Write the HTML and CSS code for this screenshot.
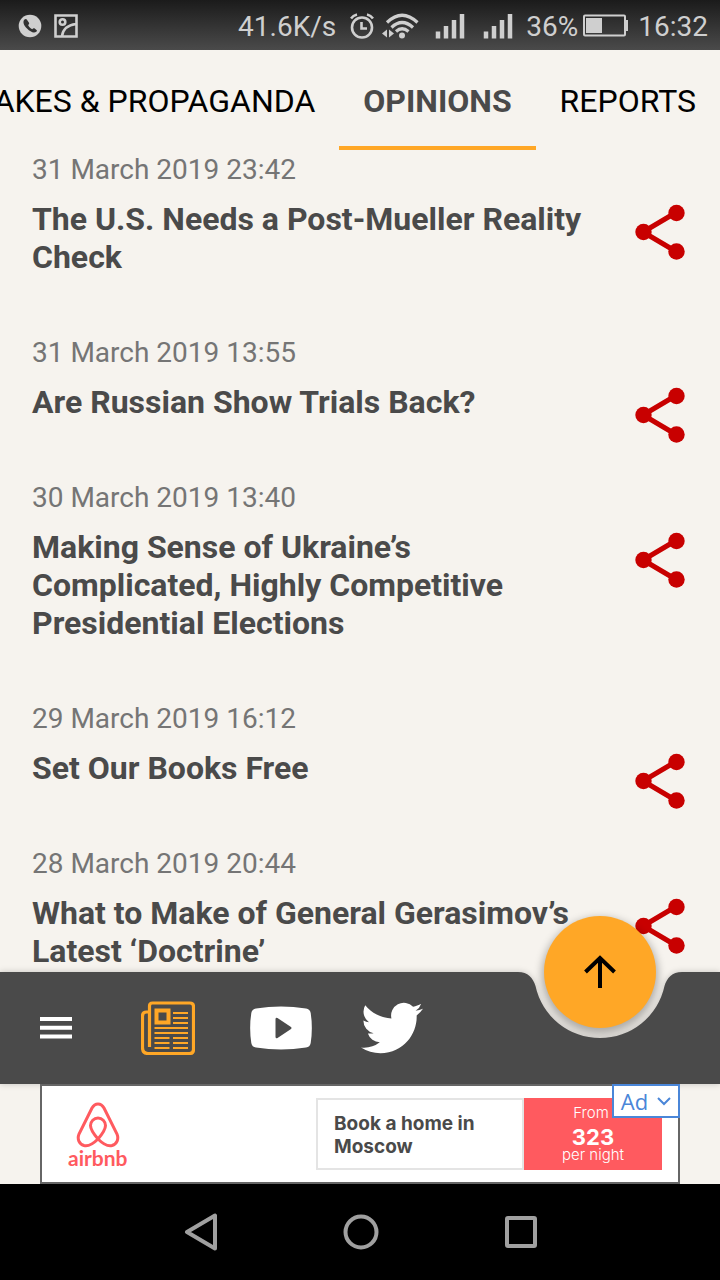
FILE: index.html
```html
<!DOCTYPE html>
<html lang="en">
<head>
<meta charset="utf-8">
<meta name="viewport" content="width=device-width, initial-scale=1">
<title>Opinions</title>
<link rel="stylesheet" href="styles.css">
</head>
<body>
<svg class="defs" aria-hidden="true">
  <symbol id="share" viewBox="0 0 64 64">
    <path d="M48 12.500 15 32 48 51.500" fill="none" stroke="currentColor" stroke-width="5"/>
    <circle cx="48.500" cy="13" r="8.200" fill="currentColor"/>
    <circle cx="15.500" cy="32" r="8.200" fill="currentColor"/>
    <circle cx="48.500" cy="51.500" r="8.200" fill="currentColor"/>
  </symbol>
  <symbol id="signal" viewBox="0 0 30 26">
    <path d="M3 25.500v-7M11 25.500V13M19 25.500V7M27 25.500V1" fill="none" stroke="currentColor" stroke-width="4.500"/>
  </symbol>
</svg>

<header class="status">
  <div class="status-group notices">
    <svg width="24" height="24" viewBox="0 0 24 24"><circle cx="12" cy="12" r="11.300" fill="currentColor"/><path d="M6.500 5.500c-2 2-1 5.500 2.500 9s7 5 9.500 3c.7-.6.600-1 0-1.600l-1.800-1.500c-.6-.4-1-.3-1.600.2l-.9.7c-1.500-.6-3.500-2.600-4.100-4.200l.8-.9c.4-.5.400-1 .1-1.500L9.300 6.200c-.8-1.300-1.800-1.600-2.800-.7z" fill="#303030"/></svg>
    <svg width="24" height="24" viewBox="0 0 24 24" fill="none" stroke="currentColor" stroke-width="2.600"><path d="M1.500 1.500h21v21h-21zM8 22C9 15 14 11 22 10"/><circle cx="8.500" cy="8" r="2.800"/></svg>
  </div>
  <div class="status-group">
    <span class="speed">41.6K/s</span>
    <svg width="24" height="26" viewBox="0 0 24 26" fill="none" stroke="currentColor" stroke-width="2.600"><circle cx="12" cy="14.500" r="10"/><path d="M11.500 9v6.500H17M1 5.500Q3 2.500 7 1.500M23 5.500Q21 2.500 17 1.500"/></svg>
    <svg class="wifi" width="38" height="26" viewBox="0 0 38 26"><g fill="none" stroke="currentColor" stroke-width="3.200"><path d="M5 9.500Q20-5 35.500 9.500M9.500 14.500Q20 4.500 31 14.500M14 18.500Q20 13 26.500 18.500"/></g><circle cx="20" cy="22.500" r="3" fill="currentColor"/><path d="M5 16.500v8L0 20.500zM7 16.500v8l5-4z" fill="currentColor"/></svg>
    <svg class="bars" width="30" height="26"><use href="#signal"/></svg>
    <svg class="bars second" width="30" height="26"><use href="#signal"/></svg>
    <span>36%</span>
    <svg class="battery" width="45" height="24" viewBox="0 0 45 24"><rect x="1" y="1.500" width="41" height="20" rx="1" fill="none" stroke="currentColor" stroke-width="2"/><path d="M3 4h16v15H3zM42 6h3v11h-3z" fill="currentColor"/></svg>
    <time>16:32</time>
  </div>
</header>

<nav class="tabs">
  <a class="tab" href="#fakes">FAKES &amp; PROPAGANDA</a>
  <a class="tab active" href="#opinions" aria-current="page">OPINIONS</a>
  <a class="tab" href="#reports">REPORTS</a>
</nav>

<main class="list">
  <article class="item">
    <div class="text"><time class="date">31 March 2019 23:42</time><h2 class="title">The U.S. Needs a Post-Mueller Reality Check</h2></div>
    <button class="share" aria-label="Share"><svg width="64" height="64"><use href="#share"/></svg></button>
  </article>
  <article class="item">
    <div class="text"><time class="date">31 March 2019 13:55</time><h2 class="title">Are Russian Show Trials Back?</h2></div>
    <button class="share" aria-label="Share"><svg width="64" height="64"><use href="#share"/></svg></button>
  </article>
  <article class="item">
    <div class="text"><time class="date">30 March 2019 13:40</time><h2 class="title">Making Sense of Ukraine’s Complicated, Highly Competitive Presidential Elections</h2></div>
    <button class="share" aria-label="Share"><svg width="64" height="64"><use href="#share"/></svg></button>
  </article>
  <article class="item">
    <div class="text"><time class="date">29 March 2019 16:12</time><h2 class="title">Set Our Books Free</h2></div>
    <button class="share" aria-label="Share"><svg width="64" height="64"><use href="#share"/></svg></button>
  </article>
  <article class="item">
    <div class="text"><time class="date">28 March 2019 20:44</time><h2 class="title">What to Make of General Gerasimov’s Latest ‘Doctrine’</h2></div>
    <button class="share" aria-label="Share"><svg width="64" height="64"><use href="#share"/></svg></button>
  </article>
</main>

<div class="dock">
  <button class="fab" aria-label="Back to top"><svg width="34" height="34" viewBox="0 0 34 34" fill="none" stroke="currentColor" stroke-width="4"><path d="M17 33V4M2.500 17 17 3l14.500 14"/></svg></button>
  <div class="bar">
    <div class="actions">
      <button class="action" aria-label="Menu"><svg width="32" height="24" viewBox="0 0 32 24"><path d="M0 3h32M0 11.700h32M0 20.400h32" stroke="currentColor" stroke-width="4"/></svg></button>
      <button class="action current" aria-label="News"><svg width="54" height="54" viewBox="0 0 54 54" fill="none" stroke="currentColor" stroke-width="3.200"><path d="M8.500 46V5q0-3 3-3H49q3.500 0 3.500 3.500v43q0 4-4 4H7q-5.500 0-5.500-6V15q0-4 4-4H8"/><rect x="15.500" y="9.500" width="12" height="12" stroke-width="4"/><path d="M32 12h15M32 17h15M32 22h15M13.500 27H47M13.500 32H47M13.500 37h15M32 37h15M13.500 42h15M32 42h15M13.500 47h15M32 47h15" stroke-width="2"/></svg></button>
      <button class="action" aria-label="YouTube"><svg width="64" height="44" viewBox="-1 0 62 44" fill="currentColor" fill-rule="evenodd"><path d="M6 2.500Q31-1.500 56 2.500q4 .5 4.700 4.500 2.300 15 0 30-.7 4-4.700 4.500-25 4-50 0Q2 41 1.300 37q-2.300-15 0-30Q2 3 6 2.500zM25.500 13v18q.3 2 2 1L41 23q1-1 0-2l-13.500-9q-1.700-1-2 1z"/></svg></button>
      <button class="action" aria-label="Twitter"><svg width="62" height="62" viewBox="0 0 24 24" fill="currentColor"><path d="M23.953 4.570a10 10 0 01-2.825.775 4.958 4.958 0 002.163-2.723c-.951.555-2.005.959-3.127 1.184a4.920 4.920 0 00-8.384 4.482C7.690 8.095 4.067 6.130 1.640 3.162a4.822 4.822 0 00-.666 2.475c0 1.710.870 3.213 2.188 4.096a4.904 4.904 0 01-2.228-.616v.060a4.923 4.923 0 003.946 4.827 4.996 4.996 0 01-2.212.085 4.936 4.936 0 004.604 3.417 9.867 9.867 0 01-6.102 2.105c-.390 0-.779-.023-1.170-.067a13.995 13.995 0 007.557 2.209c9.053 0 13.998-7.496 13.998-13.985 0-.210 0-.420-.015-.630A9.935 9.935 0 0024 4.590z"/></svg></button>
    </div>
    <svg class="notch" width="164" height="112" viewBox="0 0 164 112"><path d="M0 0C10 0 15 6 17.500 14A66 66 0 0 0 146.500 14C149 6 154 0 164 0V112H0Z"/></svg>
    <div class="bar-end"></div>
  </div>
</div>

<aside class="ad-strip">
  <div class="ad">
    <div class="brand">
      <svg width="44" height="46" viewBox="0 0 44 46" fill="none" stroke="currentColor" stroke-width="3"><path d="M22 37C16 30 14.500 26.500 14.500 23.500a7.500 7.500 0 0 1 15 0C29.500 26.500 28 30 22 37C16 43 12 44.500 8 43.500C3 42 1 37 3 32L16 6C19 .5 25 .5 28 6L41 32C43 37 41 42 36 43.500C32 44.500 28 43 22 37Z"/></svg>
      <span>airbnb</span>
    </div>
    <a class="offer" href="#offer">
      <span class="offer-text">Book a home in Moscow</span>
      <span class="price"><span class="from">From</span><strong>323</strong><span>per night</span></span>
    </a>
    <button class="ad-tag">Ad <svg width="14" height="10" viewBox="0 0 14 10" fill="none" stroke="currentColor" stroke-width="2"><path d="M1 2l6 6 6-6"/></svg></button>
  </div>
</aside>

<nav class="system">
  <button aria-label="Back"><svg width="34" height="38" viewBox="0 0 34 38"><path d="M31 2.500v33L3 19z"/></svg></button>
  <button aria-label="Home"><svg width="36" height="36" viewBox="0 0 36 36"><circle cx="18" cy="18" r="15.500"/></svg></button>
  <button aria-label="Recent apps"><svg width="34" height="34" viewBox="0 0 34 34"><rect x="3" y="3" width="28" height="28" rx="1"/></svg></button>
</nav>
</body>
</html>
```
FILE: styles.css
```css
* { box-sizing: border-box; }

body {
  margin: 0;
  height: 100vh;
  display: flex;
  flex-direction: column;
  overflow: hidden;
  background: #f6f3ee;
  color: #4a4a4a;
  font-family: Roboto, "Liberation Sans", sans-serif;
}

button {
  padding: 0;
  border: 0;
  background: none;
  color: inherit;
  font: inherit;
}

a { color: inherit; text-decoration: none; }
svg { display: block; flex: none; }
.defs { position: absolute; width: 0; height: 0; }

.status {
  flex: none;
  height: 50px;
  padding: 2px 12px 0 18px;
  display: flex;
  justify-content: space-between;
  align-items: center;
  background: linear-gradient(#1b1b1b, #4a4a4a);
  color: #cfcfcf;
  font-size: 28px;
}
.status-group { display: flex; align-items: center; }
.notices { gap: 12px; }
.speed { margin-right: 14px; }
.wifi { margin-left: 8px; }
.bars { margin-left: 15px; }
.bars.second { margin: 0 13px 0 18px; }
.battery { margin: 0 10px 0 5px; }

.tabs {
  flex: none;
  height: 100px;
  display: flex;
  justify-content: flex-end;
  overflow: hidden;
  color: #000;
  font-size: 32px;
}
.tab {
  flex: none;
  padding: 6px 24px 0;
  display: flex;
  align-items: center;
  white-space: nowrap;
  border-bottom: 4px solid transparent;
}
.tab.active {
  color: #4a4a4a;
  font-weight: 700;
  border-color: #ffa726;
}

.list {
  flex: 1;
  min-height: 0;
  padding-top: 2px;
  overflow: hidden;
}
.item {
  padding: 0 28px 0 32px;
  display: flex;
  justify-content: space-between;
}
.text {
  max-width: 560px;
  padding-bottom: 59px;
}
.date {
  display: block;
  margin-bottom: 12px;
  color: #757575;
  font-size: 28px;
  line-height: 36px;
}
.title {
  margin: 0;
  font-size: 32px;
  line-height: 38px;
}
.share {
  align-self: flex-start;
  padding-top: 48px;
  color: #c80000;
}

.dock {
  flex: none;
  position: relative;
  margin-top: -66px;
}
.bar {
  position: relative;
  display: flex;
  filter: drop-shadow(0 0 3px rgba(0, 0, 0, 0.2));
  pointer-events: none;
}
.actions {
  flex: 1;
  display: flex;
  background: #4a4a4a;
  color: #fff;
}
.action {
  width: 112px;
  height: 112px;
  display: flex;
  align-items: center;
  justify-content: center;
  pointer-events: auto;
}
.action.current { color: #ffa726; }
.notch { fill: #4a4a4a; }
.bar-end { width: 38px; background: #4a4a4a; }
.fab {
  position: absolute;
  top: -56px;
  right: 64px;
  width: 112px;
  height: 112px;
  display: flex;
  align-items: center;
  justify-content: center;
  border-radius: 50%;
  background: #ffa726;
  color: #000;
  box-shadow: 0 4px 8px 2px rgba(0, 0, 0, 0.3);
}

.ad-strip {
  flex: none;
  display: flex;
  justify-content: center;
}
.ad {
  position: relative;
  width: 640px;
  height: 100px;
  padding: 0 16px 0 26px;
  display: flex;
  align-items: center;
  justify-content: space-between;
  border: 2px solid #666;
  background: #fff;
}
.brand {
  display: flex;
  flex-direction: column;
  align-items: center;
  padding-top: 2px;
  color: #ff5a5f;
  font: 700 21px/20px Lato, sans-serif;
}
.offer {
  width: 346px;
  height: 72px;
  display: flex;
  font-family: Inter, sans-serif;
}
.offer-text {
  flex: 1;
  padding: 2px 0 0 16px;
  display: flex;
  align-items: center;
  border: 2px solid #e4e4e4;
  font-size: 19px;
  font-weight: 700;
  line-height: 23px;
}
.price {
  width: 138px;
  display: flex;
  flex-direction: column;
  align-items: center;
  justify-content: center;
  background: #ff5a5f;
  color: #fff;
  font-size: 15px;
  font-weight: 300;
  line-height: 18px;
}
.from { padding-right: 4px; }
.price strong {
  padding-top: 6px;
  font-size: 22px;
  font-weight: 700;
  line-height: 18px;
}
.ad-tag {
  position: absolute;
  top: -2px;
  right: -2px;
  width: 68px;
  height: 34px;
  display: flex;
  align-items: center;
  justify-content: center;
  gap: 9px;
  border: 2px solid #4a86d8;
  background: #fff;
  color: #4a86d8;
  font: 400 22px "Open Sans", sans-serif;
}

.system {
  flex: none;
  height: 96px;
  padding-left: 2px;
  display: flex;
  align-items: center;
  justify-content: center;
  background: #000;
}
.system button {
  width: 160px;
  display: flex;
  justify-content: center;
}
.system svg {
  fill: none;
  stroke: #a0a0a0;
  stroke-width: 4;
  stroke-linejoin: round;
}
```
